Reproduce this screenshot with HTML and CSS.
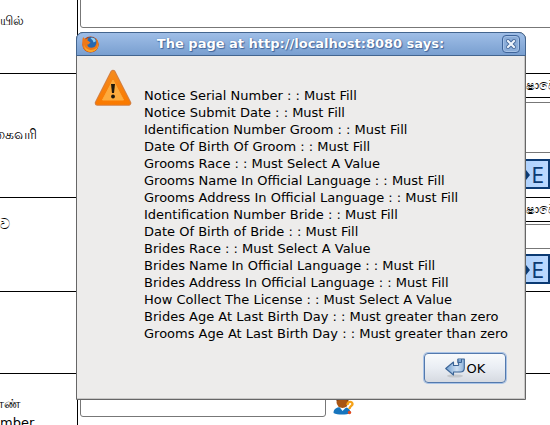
FILE: index.html
```html
<!DOCTYPE html>
<html lang="en">
<head>
<meta charset="utf-8">
<title>Marriage notice</title>
<link rel="stylesheet" href="styles.css">
</head>
<body>
<main class="form">
  <section class="row row-first">
    <label class="name" for="f1">யில்</label>
    <div class="field"><textarea class="box box-top" id="f1"></textarea></div>
  </section>
  <section class="row row-groom">
    <label class="name" for="f2">கைவரி</label>
    <div class="field">
      <div class="caption">ෂාවෙ</div>
      <textarea class="box box-tall" id="f2"></textarea>
      <button class="translate" type="button"><svg viewBox="0 0 6 10" aria-hidden="true"><path d="M0 3h2V0l4 5-4 5V7H0z"/></svg>E</button>
    </div>
  </section>
  <section class="row row-bride">
    <label class="name" for="f3">ව</label>
    <div class="field">
      <div class="caption">ෂාවෙ</div>
      <textarea class="box box-short" id="f3"></textarea>
      <button class="translate" type="button"><svg viewBox="0 0 6 10" aria-hidden="true"><path d="M0 3h2V0l4 5-4 5V7H0z"/></svg>E</button>
    </div>
  </section>
  <section class="row row-empty"><div class="name"></div><div class="field"></div></section>
  <section class="row row-last">
    <label class="name" for="f4">எண்<br>mber</label>
    <div class="field lookup">
      <input class="box box-input" id="f4" type="text">
      <svg class="person" viewBox="0 0 20 20" aria-hidden="true">
        <path d="M0 18c0-5 4-6 9-6s8 2 8 6c-4 2-13 2-17 0z" fill="#1775bd"/>
        <path d="M6 12l3 4 4-4z" fill="#fff"/>
        <circle cx="9" cy="7" r="6" fill="#a95513"/>
        <path d="M3 6c0-8 12-8 12 0-3-2-9-2-12 0z" fill="#5a2b12"/>
        <path d="M14 10c0-4 5-4 5-1 0 2-3 2-3 5" fill="none" stroke="#f5a21a" stroke-width="2.4"/>
        <circle cx="16" cy="17.500" r="1.700" fill="#e4491d"/>
      </svg>
    </div>
  </section>
</main>

<div class="dialog" role="alertdialog" aria-labelledby="title" aria-describedby="messages">
  <header class="bar">
    <svg class="fox" viewBox="0 0 16 16" aria-hidden="true">
      <circle cx="8" cy="8" r="7.600" fill="#bd3f0a"/>
      <circle cx="8.500" cy="6.500" r="5.500" fill="#2668b0"/>
      <path d="M8 2c3-1 5 1 5 3l-2 1-1-2z" fill="#8fd0f3"/>
      <path d="M1 1l2 2 3-1-1 2 3 2-2 2H5c0 3 4 4 7 2 2-2 2-5 1-8 4 4 3 9 0 11-4 4-10 2-12-2C0 8 0 4 1 1z" fill="#ee7818"/>
      <path d="M2 8c1 5 7 7 12 3 1-2 1-4 .5-5 2 5-2 9-6.500 9C4 15 2 12 2 8z" fill="#f9a62a"/>
    </svg>
    <h1 id="title">The page at http://localhost:8080 says:</h1>
    <button class="close" type="button" aria-label="Close"><svg viewBox="0 0 10 10" aria-hidden="true"><path d="M2 2l6 6M8 2L2 8" stroke="#44679a" stroke-width="4" stroke-linecap="square"/><path d="M2 2l6 6M8 2L2 8" stroke="#eef4fc" stroke-width="2.200" stroke-linecap="square"/></svg></button>
  </header>
  <div class="content">
    <svg class="warning" viewBox="0 0 38 38" aria-hidden="true">
      <defs><linearGradient id="amber" x1="0" y1="0" x2="0" y2="1"><stop offset="0" stop-color="#f58a1c"/><stop offset="1" stop-color="#fa7a00"/></linearGradient></defs>
      <path d="M19 3.500L34.500 34h-31z" fill="#c9773a" stroke="#d37f42" stroke-width="5.500" stroke-linejoin="round"/>
      <path d="M19 3.500L34.500 34h-31z" fill="url(#amber)" stroke="url(#amber)" stroke-width="3.500" stroke-linejoin="round"/>
      <path d="M19 11L29.500 31h-21z" fill="#fdab3d" stroke="#fdab3d" stroke-linejoin="round"/>
      <path d="M17 15h4l-1 9h-2z" fill="#20180c"/><circle cx="19" cy="27.500" r="1.900" fill="#20180c"/>
    </svg>
    <div class="messages" id="messages">
      <div>Notice Serial Number : : Must Fill</div>
      <div>Notice Submit Date : : Must Fill</div>
      <div>Identification Number Groom : : Must Fill</div>
      <div>Date Of Birth Of Groom : : Must Fill</div>
      <div>Grooms Race : : Must Select A Value</div>
      <div>Grooms Name In Official Language : : Must Fill</div>
      <div>Grooms Address In Official Language : : Must Fill</div>
      <div>Identification Number Bride : : Must Fill</div>
      <div>Date Of Birth of Bride : : Must Fill</div>
      <div>Brides Race : : Must Select A Value</div>
      <div>Brides Name In Official Language : : Must Fill</div>
      <div>Brides Address In Official Language : : Must Fill</div>
      <div>How Collect The License : : Must Select A Value</div>
      <div>Brides Age At Last Birth Day : : Must greater than zero</div>
      <div>Grooms Age At Last Birth Day : : Must greater than zero</div>
    </div>
  </div>
  <footer class="actions">
    <button class="ok" type="button">
      <svg viewBox="0 0 20 20" aria-hidden="true">
        <defs><linearGradient id="steel" x1="0" y1="0" x2="1" y2="0"><stop offset="0" stop-color="#6f9fd2"/><stop offset=".6" stop-color="#cfe0f2"/><stop offset="1" stop-color="#8eb2da"/></linearGradient></defs>
        <ellipse cx="10" cy="18" rx="8" ry="1.600" fill="#c4c8cd"/>
        <path d="M.7 10.500L8.500 4v3.500H13c1 0 1-1 0-3V1h6.300v9c0 3-2 4-4 4H8.500v3z" fill="url(#steel)" stroke="#3b6496" stroke-width="1.100" stroke-linejoin="round"/>
        <path d="M13 1v3.500h3.500V1" fill="#7da5d1" stroke="#3b6496"/>
      </svg>OK
    </button>
  </footer>
</div>
</body>
</html>
```
FILE: styles.css
```css
* { box-sizing: border-box; }

body {
  margin: 0;
  background: #fff;
  color: #000;
  font-family: "DejaVu Sans", "Noto Sans", sans-serif;
  font-size: 13px;
  line-height: 17px;
}

button, input, textarea { font: inherit; margin: 0; }

.form {
  height: 100vh;
  overflow: hidden;
}

.row {
  display: grid;
  grid-template-columns: 77px 1fr;
  border-bottom: 1px solid #000;
}
.row-first { height: 74px; }
.row-groom { height: 124px; }
.row-bride { height: 94px; }
.row-empty { height: 82px; }
.row-last { height: 74px; }

.name { padding-top: 12px; white-space: nowrap; font-size: 14px; }
.row-first .name { font-size: 13px; }
.row-groom .name { padding-top: 52px; text-indent: -8px; }
.row-bride .name { padding-top: 18px; }
.row-last .name { padding-top: 20px; font-size: 13px; line-height: 19px; text-indent: -6px; }

.field {
  border-left: 1px solid #000;
  display: flex;
  flex-direction: column;
  min-width: 0;
}

.caption {
  height: 24px;
  padding-top: 3px;
  border-bottom: 1px solid #000;
  text-align: right;
  white-space: nowrap;
  margin-right: -7px;
}

.box {
  border: 1px solid #777;
  border-radius: 3px;
  background: #fff;
  resize: none;
  padding: 2px;
  margin-left: 2px;
}
.box-top { height: 32px; margin-top: -4px; margin-right: -4px; }
.box-tall { height: 51px; margin-top: 4px; margin-right: -4px; }
.box-short { height: 25px; margin-top: 2px; margin-right: -4px; }
.box-short + .translate { margin-top: 5px; }

.translate {
  align-self: flex-end;
  display: flex;
  align-items: center;
  justify-content: flex-end;
  gap: 1px;
  width: 48px;
  height: 30px;
  margin-top: 6px;
  padding: 2px 4px 0 0;
  border: 2px solid #0b3a73;
  background: linear-gradient(90deg, #a4ccfc, #bcd9ff);
  color: #0b3a73;
  font-family: "DejaVu Sans Condensed", "DejaVu Sans", sans-serif;
  font-size: 22px;
}
.translate svg { width: 6px; height: 10px; fill: #0b3a73; }

.lookup { flex-direction: row; align-items: flex-start; gap: 7px; padding-top: 21px; }
.box-input { width: 246px; height: 22px; }
.person { width: 21px; height: 20px; }

.dialog {
  position: absolute;
  top: 32px;
  left: 76px;
  right: 24px;
  border: 1px solid #666;
  border-radius: 7px 7px 0 0;
  background: #edeceb;
  box-shadow: inset -1px -1px #c8c7c6;
}

.bar {
  display: flex;
  align-items: center;
  height: 24px;
  margin: -1px -1px 0;
  padding: 0 5px;
  border: 1px solid #43658f;
  border-radius: 7px 7px 0 0;
  background: linear-gradient(#9fbee7, #799fd0);
}
.bar h1 {
  flex: 1;
  margin: 0;
  text-align: center;
  font-size: 13px;
  line-height: 20px;
  color: #fff;
  text-shadow: 0 0 1px #3f649a, 1px 1px 1px #3f649a;
}
.fox { width: 17px; height: 17px; }
.close {
  display: flex;
  align-items: center;
  justify-content: center;
  width: 18px;
  height: 18px;
  padding: 0;
  border: 1px solid #3f659b;
  border-radius: 4px;
  background: #8badd9;
  box-shadow: inset 0 0 0 1px #a6c2e6;
}
.close svg { width: 10px; height: 10px; }

.content {
  display: flex;
  gap: 12px;
  padding: 13px 12px 0 17px;
}
.warning { flex: none; width: 38px; height: 38px; }
.messages { padding-top: 18px; white-space: nowrap; }

.actions {
  display: flex;
  justify-content: flex-end;
  padding: 11px 19px 16px;
}
.ok {
  display: flex;
  align-items: center;
  justify-content: center;
  gap: 2px;
  width: 82px;
  height: 30px;
  padding: 0;
  border: 1px solid #5379ad;
  border-radius: 4px;
  box-shadow: 0 0 0 1px #a9c3e6;
  background: linear-gradient(#f8fafc, #e9edf3 50%, #d6dae1);
  color: #000;
}
.ok svg { width: 20px; height: 20px; }
```
